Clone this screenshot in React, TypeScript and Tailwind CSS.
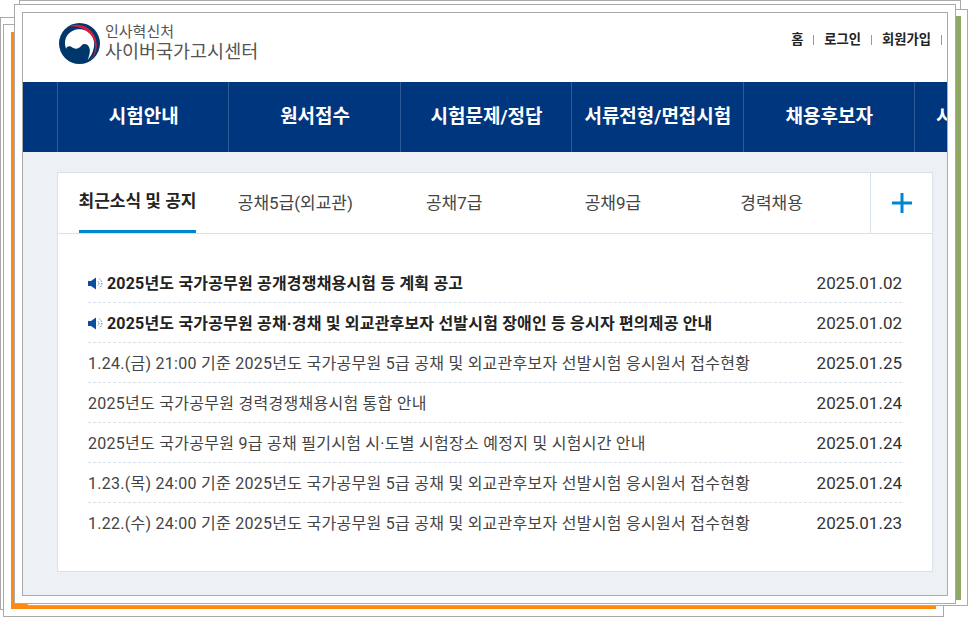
import React from "react";

const font = { fontFamily: '"Roboto", "Noto Sans CJK KR", sans-serif' };

const navItems = ["시험안내", "원서접수", "시험문제/정답", "서류전형/면접시험", "채용후보자", "시험정보/자료실"];

const tabs = ["공채5급(외교관)", "공채7급", "공채9급", "경력채용"];

const notices = [
  { title: "2025년도 국가공무원 공개경쟁채용시험 등 계획 공고", date: "2025.01.02", pinned: true },
  { title: "2025년도 국가공무원 공채·경채 및 외교관후보자 선발시험 장애인 등 응시자 편의제공 안내", date: "2025.01.02", pinned: true },
  { title: "1.24.(금) 21:00 기준 2025년도 국가공무원 5급 공채 및 외교관후보자 선발시험 응시원서 접수현황", date: "2025.01.25" },
  { title: "2025년도 국가공무원 경력경쟁채용시험 통합 안내", date: "2025.01.24" },
  { title: "2025년도 국가공무원 9급 공채 필기시험 시·도별 시험장소 예정지 및 시험시간 안내", date: "2025.01.24" },
  { title: "1.23.(목) 24:00 기준 2025년도 국가공무원 5급 공채 및 외교관후보자 선발시험 응시원서 접수현황", date: "2025.01.24" },
  { title: "1.22.(수) 24:00 기준 2025년도 국가공무원 5급 공채 및 외교관후보자 선발시험 응시원서 접수현황", date: "2025.01.23" },
];

const Emblem = () => (
  <svg width="41" height="41" viewBox="0 0 40 40" className="shrink-0">
    <circle cx="20" cy="20" r="20" fill="#00376b" />
    <path
      d="M7 25C3 14 11 6 20 6C30 6 36 15 34 24C33 29 31 33 28 36C30 31 31 26 29 23C27 20 24 20 22 22C20 25 16 26 13 24C11 22 8 22 7 25Z"
      fill="#fff"
    />
    <path d="M9 3.3A20 20 0 0 1 28 38.3C35 33 37 24 34 16C30 7 19 2 9 3.3Z" fill="#e2173f" />
  </svg>
);

const Speaker = () => (
  <svg width="15" height="13" viewBox="0 0 15 13" className="shrink-0">
    <path d="M0 4H3L8 0.5V12.5L3 9H0Z" fill="#0b4f9e" />
    <path d="M10 4.5A2.5 2.5 0 0 1 10 8.5" fill="none" stroke="#0b4f9e" strokeWidth="1" strokeDasharray="1 1" />
    <path d="M11.5 2A5.5 5.5 0 0 1 11.5 11" fill="none" stroke="#0b4f9e" strokeWidth="1" strokeDasharray="1 1.4" />
  </svg>
);

const App = () => {
  return (
    <div className="relative w-[968px] h-[617px] overflow-hidden bg-white" style={font}>
      {/* stacked windows behind the page */}
      <div className="absolute left-[19px] top-0 w-[942px] h-[100px] border border-[#aaaaaa] bg-white" />
      <div className="absolute left-0 top-[17px] w-[200px] h-[593px] border border-[#aaaaaa] bg-white" />
      <div className="absolute left-[3px] top-[24px] w-[941px] h-[593px] border border-[#aaaaaa] bg-white">
        <div className="absolute left-[7px] top-[7px] w-[925px] h-[577px] bg-[#ff8a12]" />
      </div>
      <div className="absolute left-[27px] top-[9px] w-[941px] h-[597px] border border-[#aaaaaa] bg-white">
        <div className="absolute left-[928px] top-[6px] w-[5px] h-[584px] bg-[#8fa765]" />
      </div>
      <div className="absolute left-[14px] top-[4px] w-[942px] h-[600px] border border-[#aaaaaa] bg-white" />

      {/* main window */}
      <div className="absolute left-[22px] top-[12px] w-[926px] h-[584px] border border-[#aaaaaa] bg-white overflow-hidden flex flex-col">
        <header className="h-[69px] shrink-0 flex items-start justify-between pl-[36px]">
          <div className="flex items-center gap-[5px] pt-[10px]">
            <Emblem />
            <div className="text-[#555555] leading-none">
              <div className="text-[15px] h-[16px] leading-[16px]">인사혁신처</div>
              <div className="text-[18.5px] h-[22px] leading-[22px] mt-[1px]">사이버국가고시센터</div>
            </div>
          </div>
          <div className="flex items-center pt-[18px] pr-[5px] text-[13.3px] leading-[18px] font-bold text-[#222222]">
            <span>홈</span>
            <span className="mx-[10px] w-px h-[10px] bg-[#999999]" />
            <span>로그인</span>
            <span className="mx-[10px] w-px h-[10px] bg-[#999999]" />
            <span>회원가입</span>
            <span className="ml-[10px] w-px h-[10px] bg-[#999999]" />
          </div>
        </header>

        <nav className="h-[70px] shrink-0 bg-[#00367e] flex pl-[34px]">
          {navItems.map((item) => (
            <div
              key={item}
              className="w-[171.4px] shrink-0 border-l border-[#2f5c96] flex items-center justify-center pt-px pl-px text-white text-[19px] font-bold whitespace-nowrap"
            >
              {item}
            </div>
          ))}
        </nav>

        <main className="flex-1 bg-[#edf0f5] pt-[20px] pl-[34px] pr-[14px]">
          <section className="h-[400px] bg-white border border-[#d9e2ea]">
            <div className="h-[61px] flex border-b border-[#d9e2ea]">
              <div className="ml-[21px] w-[117px] h-[60px] flex items-center justify-center pt-px border-b-[3px] border-[#0085d0] text-[17px] font-bold text-[#222222] whitespace-nowrap">
                최근소식 및 공지
              </div>
              <div className="flex ml-[20px] w-[635px]">
                {tabs.map((tab) => (
                  <div key={tab} className="w-[159px] flex items-center justify-center pt-px text-[17px] text-[#444444] whitespace-nowrap">
                    {tab}
                  </div>
                ))}
              </div>
              <div className="ml-auto w-[62px] border-l border-[#d9e2ea] flex items-center justify-center">
                <svg width="20" height="20" viewBox="0 0 20 20">
                  <path d="M0 8.5H20V11.5H0ZM8.5 0H11.5V20H8.5Z" fill="#0085d0" />
                </svg>
              </div>
            </div>
            <ul className="pt-[29px] pl-[30px] pr-[30px]">
              {notices.map((n, i) => (
                <li
                  key={i}
                  className={`h-[40px] flex items-center justify-between pt-[2px] border-dashed border-[#d9e2ea] ${i < notices.length - 1 ? "border-b" : ""}`}
                >
                  <span
                    className={`flex items-center gap-[4px] text-[16px] whitespace-nowrap ${
                      n.pinned ? "font-bold tracking-[0.18px] text-[#222222]" : "tracking-[0.27px] text-[#444444]"
                    }`}
                  >
                    {n.pinned && <Speaker />}
                    {n.title}
                  </span>
                  <span className="text-[17px] text-[#333333]">{n.date}</span>
                </li>
              ))}
            </ul>
          </section>
        </main>
      </div>
    </div>
  );
};

export default App;
